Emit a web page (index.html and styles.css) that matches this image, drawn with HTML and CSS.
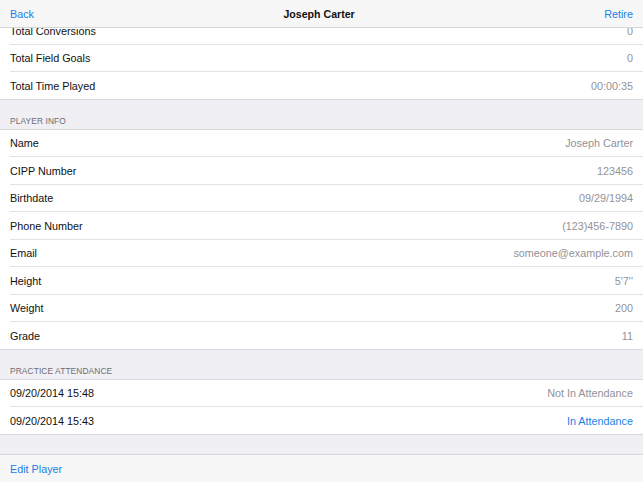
FILE: index.html
```html
<!DOCTYPE html>
<html>
<head>
<meta charset="utf-8">
<link rel="stylesheet" href="styles.css">
</head>
<body>
<div class="screen">
  <header class="navbar">
    <span class="nav-btn">Back</span>
    <span class="nav-title">Joseph Carter</span>
    <span class="nav-btn">Retire</span>
  </header>
  <main class="content">
    <section class="group first-group">
      <div class="row clipped"><div class="row-inner"><span class="label">Total Conversions</span><span class="value">0</span></div></div>
      <div class="row"><div class="row-inner"><span class="label">Total Field Goals</span><span class="value">0</span></div></div>
      <div class="row"><div class="row-inner"><span class="label">Total Time Played</span><span class="value">00:00:35</span></div></div>
    </section>
    <div class="section-header">PLAYER INFO</div>
    <section class="group">
      <div class="row"><div class="row-inner"><span class="label">Name</span><span class="value">Joseph Carter</span></div></div>
      <div class="row"><div class="row-inner"><span class="label">CIPP Number</span><span class="value">123456</span></div></div>
      <div class="row"><div class="row-inner"><span class="label">Birthdate</span><span class="value">09/29/1994</span></div></div>
      <div class="row"><div class="row-inner"><span class="label">Phone Number</span><span class="value">(123)456-7890</span></div></div>
      <div class="row"><div class="row-inner"><span class="label">Email</span><span class="value">someone@example.com</span></div></div>
      <div class="row"><div class="row-inner"><span class="label">Height</span><span class="value">5'7''</span></div></div>
      <div class="row"><div class="row-inner"><span class="label">Weight</span><span class="value">200</span></div></div>
      <div class="row"><div class="row-inner"><span class="label">Grade</span><span class="value">11</span></div></div>
    </section>
    <div class="section-header">PRACTICE ATTENDANCE</div>
    <section class="group">
      <div class="row"><div class="row-inner"><span class="label">09/20/2014 15:48</span><span class="value">Not In Attendance</span></div></div>
      <div class="row"><div class="row-inner"><span class="label">09/20/2014 15:43</span><span class="value blue">In Attendance</span></div></div>
    </section>
  </main>
  <footer class="toolbar">
    <span class="nav-btn">Edit Player</span>
  </footer>
</div>
</body>
</html>
```

FILE: styles.css
```css
html, body {
  margin: 0;
  padding: 0;
}
body {
  font-family: "Liberation Sans", Arial, sans-serif;
  background: #efeff4;
  color: #000;
}
.screen {
  width: 643px;
  height: 482px;
  display: flex;
  flex-direction: column;
  overflow: hidden;
  background: #efeff4;
}
.navbar {
  height: 27px;
  flex: none;
  background: #f7f7f7;
  border-bottom: 1px solid #d6d6d8;
  display: flex;
  align-items: center;
  justify-content: space-between;
  padding: 0 10px;
  position: relative;
  z-index: 2;
}
.nav-btn {
  color: #1a7fe6;
  font-size: 10.8px;
}
.nav-title {
  font-size: 10.6px;
  font-weight: bold;
  color: #111;
}
.content {
  flex: 1;
  overflow: hidden;
}
.group {
  background: #fff;
  border-top: 1px solid #d9d9dd;
  border-bottom: 1px solid #d9d9dd;
}
.first-group {
  border-top: none;
}
.row {
  padding-left: 10px;
}
.row.clipped {
  margin-top: -11px;
}
.row-inner {
  height: 27.5px;
  box-sizing: border-box;
  border-bottom: 1px solid #e3e3e6;
  display: flex;
  align-items: center;
  justify-content: space-between;
  padding: 1px 10px 0 0;
  font-size: 10.8px;
}
.row:last-child .row-inner {
  border-bottom: none;
  height: 26.5px;
}
.label {
  color: #111;
}
.value {
  color: #929297;
}
.value.blue {
  color: #1a7fe6;
}
.section-header {
  height: 29px;
  box-sizing: border-box;
  padding: 16px 10px 0 10px;
  font-size: 8.4px;
  color: #6d6d72;
  letter-spacing: 0.1px;
}
.toolbar {
  height: 28px;
  flex: none;
  box-sizing: border-box;
  background: #f7f7f7;
  border-top: 1px solid #d6d6d8;
  display: flex;
  align-items: center;
  padding: 0 10px;
}
```
